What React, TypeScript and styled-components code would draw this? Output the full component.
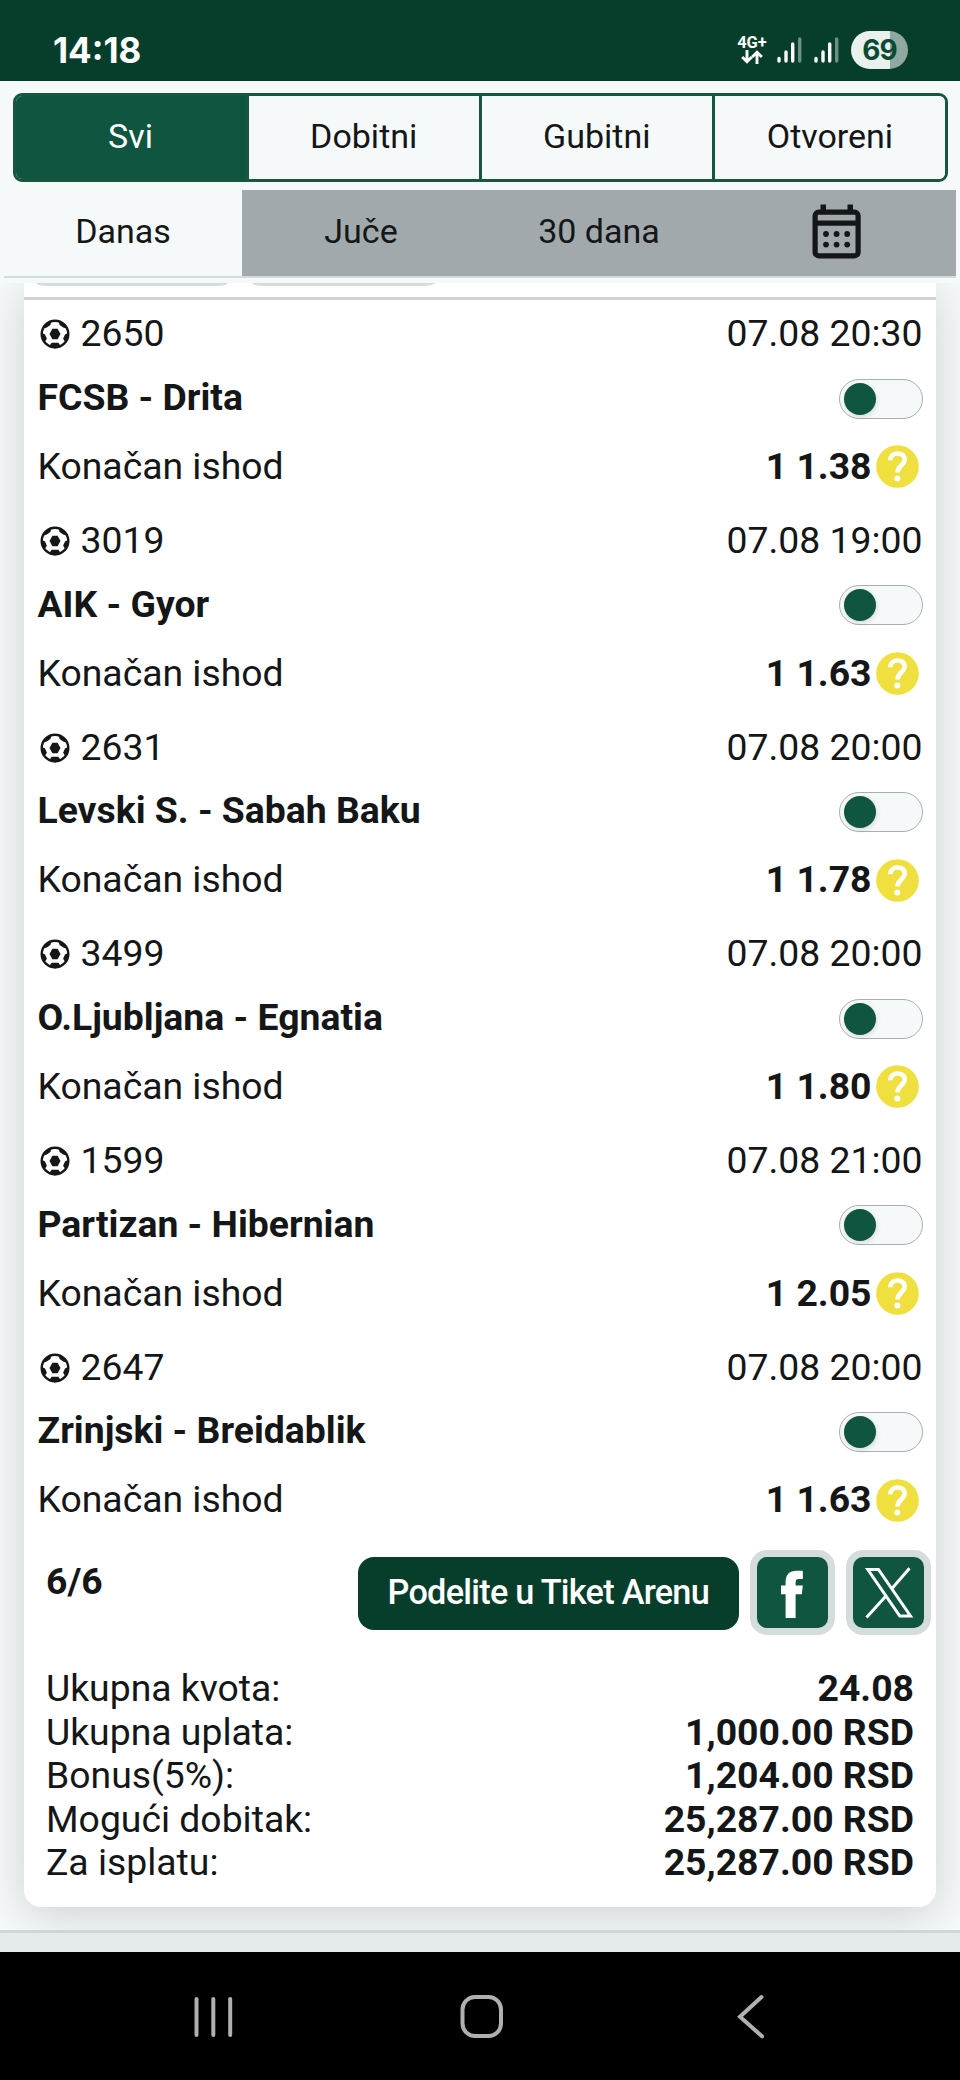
import React from "react";
import styled, { createGlobalStyle } from "styled-components";

const GlobalStyle = createGlobalStyle`
  *, *::before, *::after { box-sizing: border-box; }
  body { margin: 0; background: #f5f9fa; }
  button { font: inherit; color: inherit; border: 0; padding: 0; margin: 0; background: none; }
`;

const Screen = styled.div`
  width: 960px;
  height: 2080px;
  display: flex;
  flex-direction: column;
  overflow: hidden;
  background: #f5f9fa;
  color: #141617;
  font-family: Roboto, "Liberation Sans", sans-serif;
  font-size: 37.33px;
`;

const StatusBar = styled.div`
  flex: none;
  height: 80.5px;
  padding: 19px 52px 0 53px;
  display: flex;
  align-items: center;
  justify-content: space-between;
  background: #063e2b;
  color: #fff;
`;

const Clock = styled.span`
  font-family: Inter, sans-serif;
  font-weight: 700;
  font-size: 35px;
  line-height: 40px;
`;

const StatusIcons = styled.div`
  display: flex;
  align-items: center;
`;

const Network = styled.div`
  width: 30px;
  display: flex;
  flex-direction: column;
  align-items: center;
  margin-right: 9px;
  font-weight: 700;
  font-size: 16.5px;
  line-height: 15px;
`;

const Signal = styled.svg`
  width: 26px;
  height: 28px;
  margin-right: 10.5px;
`;

const Battery = styled.div`
  width: 57px;
  height: 38px;
  margin-left: 2px;
  border-radius: 19px;
  background: linear-gradient(to right, #e9f1ee 0 69%, #8fa9a0 69%);
  color: #0b4a35;
  font-family: Inter, sans-serif;
  font-weight: 700;
  font-size: 28px;
  letter-spacing: -1px;
  line-height: 38px;
  text-align: center;
`;

const Header = styled.header`
  flex: none;
  height: 202.5px;
  padding: 12.5px 4px 0;
  position: relative;
  z-index: 1;
  background: #f5f9fa;
  font-size: 34px;
`;

const FilterTabs = styled.nav`
  display: flex;
  height: 88.5px;
  margin: 0 8px 0 8.5px;
  border: 3px solid #17563f;
  border-radius: 9px;
  overflow: hidden;
`;

const FilterTab = styled.button<{ $active?: boolean }>`
  flex: 1;
  padding-bottom: 3px;
  background: ${(p) => (p.$active ? "#0f5540" : "#f5f9fa")};
  color: ${(p) => (p.$active ? "#fff" : "inherit")};
  & + & { border-left: 3px solid #17563f; }
`;

const PeriodTabs = styled.nav`
  display: flex;
  height: 88px;
  margin-top: 8.5px;
  border-bottom: 2.67px solid #d5dbdd;
`;

const PeriodTab = styled.button<{ $active?: boolean }>`
  flex: 1;
  display: flex;
  align-items: center;
  justify-content: center;
  padding-bottom: 4px;
  background: ${(p) => (p.$active ? "#f5f9fa" : "#a2a9ac")};
`;

const Content = styled.main`
  flex: none;
  height: 1650px;
  padding: 0 24px;
  overflow: hidden;
  border-bottom: 3px solid #d0d5d7;
`;

const Ticket = styled.article`
  height: 1623.5px;
  background: #fff;
  border-radius: 0 0 17px 17px;
  box-shadow: 0 8px 46px rgba(0, 0, 0, 0.16);
`;

const ChipStrip = styled.div`
  height: 16.5px;
  display: flex;
  gap: 24px;
  padding-left: 12px;
  border-bottom: 3px solid #d0d2d3;
`;

const ChipEdge = styled.div<{ $width: number }>`
  width: ${(p) => p.$width}px;
  height: 3px;
  background: #d5dcde;
  border-radius: 0 0 12px 12px / 0 0 3px 3px;
`;

const Match = styled.section`
  padding: 0 13.5px;
`;

const Line = styled.div<{ $height: number; $bold?: boolean }>`
  height: ${(p) => p.$height}px;
  padding-bottom: 1.5px;
  display: flex;
  align-items: center;
  justify-content: space-between;
  font-weight: ${(p) => (p.$bold ? 700 : 400)};
  white-space: nowrap;
`;

const Code = styled.span`
  display: flex;
  align-items: center;
  gap: 11px;
  padding-left: 2px;

  svg { margin-top: 2px; }
`;

const Toggle = styled.button`
  width: 84px;
  height: 40px;
  margin: 3.5px 0 0;
  padding: 0 4px;
  display: flex;
  align-items: center;
  border: 1px solid #a9aeb0;
  border-radius: 20px;
  background: #f5f9fa;
`;

const Knob = styled.span`
  width: 32px;
  height: 32px;
  border-radius: 50%;
  background: #0f5540;
  box-shadow: 1px 2px 5px rgba(0, 0, 0, 0.12);
`;

const Odds = styled.span`
  display: flex;
  align-items: center;
  gap: 4.5px;
  padding-right: 3.5px;
  font-weight: 700;

  svg { margin-top: 2px; }
`;

const Actions = styled.div`
  height: 96px;
  padding: 10.5px 5px 0 22px;
  display: flex;
  align-items: flex-start;
`;

const Count = styled.strong`
  flex: 1;
  padding-top: 9px;
  line-height: 44px;
`;

const ShareButton = styled.button`
  width: 381.5px;
  height: 73.5px;
  margin: 7px 10.5px 0 0;
  padding-bottom: 3px;
  border-radius: 16px;
  background: #063e2b;
  color: #fff;
  font-size: 34.3px;
  font-weight: 500;
  letter-spacing: -0.75px;
  white-space: nowrap;
`;

const SocialButton = styled.button`
  width: 85.5px;
  height: 85.5px;
  border: 7px solid #d5dcde;
  border-radius: 17px;
  background: #d5dcde;
  & + & { margin-left: 10.5px; }
`;

const SocialFace = styled.span`
  display: flex;
  width: 100%;
  height: 100%;
  border-radius: 10px;
  background: #0f5540;
`;

const Totals = styled.dl`
  margin: 0;
  padding: 31.5px 22px 0;
`;

const TotalRow = styled.div`
  height: 43.6px;
  display: flex;
  justify-content: space-between;
  align-items: center;
  line-height: 43.6px;
`;

const Term = styled.dt``;

const Amount = styled.dd`
  margin: 0;
  font-weight: 700;
`;

const PageFoot = styled.div`
  flex: none;
  height: 19px;
  background: #e5eaec;
`;

const NavBar = styled.footer`
  flex: 1;
  display: flex;
  align-items: center;
  justify-content: space-between;
  padding: 2px 187px 0 187px;
  background: #000;
`;

const Bars = () => (
  <Signal viewBox="0 0 26 28" stroke="#fff" strokeWidth="3.4" strokeLinecap="round">
    <path d="M3 22.5V25M10 16V25M16.7 8V25" />
    <path d="M23.7 3V25" stroke="#6d8f84" />
  </Signal>
);

const SoccerBall = () => (
  <svg width="30" height="30" viewBox="0 0 30 30">
    <circle cx="15" cy="15" r="13.3" fill="#fff" stroke="#141617" strokeWidth="2.4" />
    <g fill="#141617">
      <path d="M12.4 9.8h5.2l2.9 5.2-2.9 5.2h-5.2L9.5 15z" />
      <path d="M4.2 6.2 11.6 1.4 10.4 6 6.8 8.4 3 9.8z" />
      <path d="M25.8 6.2 18.4 1.4 19.6 6 23.2 8.4 27 9.8z" />
      <path d="M1.2 13.5 5 15.4 6.9 19.8 4.6 23.2 1.6 19z" />
      <path d="M28.8 13.5 25 15.4 23.1 19.8 25.4 23.2 28.4 19z" />
      <path d="M9 27.6 11.6 23.8H18.4L21 27.6 15 29.4z" />
    </g>
  </svg>
);

const QuestionBadge = () => (
  <svg width="43" height="43" viewBox="0 0 43 43">
    <circle cx="21.5" cy="21.5" r="21.3" fill="#efdf3f" />
    <path
      d="M14.3 15.2C14.3 6.3 28.7 6.3 28.7 14.6C28.7 20.2 21.5 20.6 21.5 27.6"
      fill="none"
      stroke="#fff"
      strokeWidth="4.6"
    />
    <circle cx="21.3" cy="33.4" r="3" fill="#fff" />
  </svg>
);

const CalendarIcon = () => (
  <svg width="50" height="56" viewBox="0 0 50 56">
    <path d="M8.5 1.5h5.5v6H8.5zM35.5 1.5H41v6h-5.5z" fill="#141617" />
    <rect x="3.1" y="9.2" width="43" height="43.6" rx="3.5" fill="none" stroke="#141617" strokeWidth="5.2" />
    <path d="M4 20.2H46" stroke="#141617" strokeWidth="5.2" />
    <g fill="#141617">
      {[14, 24.6, 35.2].map((x) =>
        [31, 41.6].map((y) => <circle key={`${x}-${y}`} cx={x} cy={y} r="2.9" />)
      )}
    </g>
  </svg>
);

const matches = [
  { code: "2650", time: "07.08 20:30", teams: "FCSB - Drita", odds: "1.38" },
  { code: "3019", time: "07.08 19:00", teams: "AIK - Gyor", odds: "1.63" },
  { code: "2631", time: "07.08 20:00", teams: "Levski S. - Sabah Baku", odds: "1.78" },
  { code: "3499", time: "07.08 20:00", teams: "O.Ljubljana - Egnatia", odds: "1.80" },
  { code: "1599", time: "07.08 21:00", teams: "Partizan - Hibernian", odds: "2.05" },
  { code: "2647", time: "07.08 20:00", teams: "Zrinjski - Breidablik", odds: "1.63" },
];

const totals = [
  ["Ukupna kvota:", "24.08"],
  ["Ukupna uplata:", "1,000.00 RSD"],
  ["Bonus(5%):", "1,204.00 RSD"],
  ["Mogući dobitak:", "25,287.00 RSD"],
  ["Za isplatu:", "25,287.00 RSD"],
];

export default function App() {
  return (
    <Screen>
      <GlobalStyle />
      <StatusBar>
        <Clock>14:18</Clock>
        <StatusIcons>
          <Network>
            4G+
            <svg width="22" height="14" viewBox="0 0 22 14" fill="none" stroke="#fff" strokeWidth="2.9">
              <path d="M6 0V12M1.2 7 6 11.8 10.8 7M16 14V2M11.2 7 16 2.2 20.8 7" />
            </svg>
          </Network>
          <Bars />
          <Bars />
          <Battery>69</Battery>
        </StatusIcons>
      </StatusBar>

      <Header>
        <FilterTabs>
          <FilterTab $active>Svi</FilterTab>
          <FilterTab>Dobitni</FilterTab>
          <FilterTab>Gubitni</FilterTab>
          <FilterTab>Otvoreni</FilterTab>
        </FilterTabs>
        <PeriodTabs>
          <PeriodTab $active>Danas</PeriodTab>
          <PeriodTab>Juče</PeriodTab>
          <PeriodTab>30 dana</PeriodTab>
          <PeriodTab aria-label="Kalendar">
            <CalendarIcon />
          </PeriodTab>
        </PeriodTabs>
      </Header>

      <Content>
        <Ticket>
          <ChipStrip>
            <ChipEdge $width={192} />
            <ChipEdge $width={183} />
          </ChipStrip>
          {matches.map((m) => (
            <Match key={m.code}>
              <Line $height={69}>
                <Code>
                  <SoccerBall />
                  {m.code}
                </Code>
                <span>{m.time}</span>
              </Line>
              <Line $height={58.67} $bold>
                <span>{m.teams}</span>
                <Toggle aria-label={m.teams}>
                  <Knob />
                </Toggle>
              </Line>
              <Line $height={79}>
                <span>Konačan ishod</span>
                <Odds>
                  1 {m.odds}
                  <QuestionBadge />
                </Odds>
              </Line>
            </Match>
          ))}
          <Actions>
            <Count>6/6</Count>
            <ShareButton>Podelite u Tiket Arenu</ShareButton>
            <SocialButton aria-label="Facebook">
              <SocialFace>
                <svg width="71.5" height="71.5" viewBox="0 0 71.5 71.5">
                  <path
                    d="M28.6 61V37.2H24V28.5H28.6V25C28.6 17.5 32.5 13.7 39.5 13.7H45.8V22H42C39.4 22 38.6 23.2 38.6 25.4V28.5H45.8L44.8 37.2H38.6V61Z"
                    fill="#fff"
                  />
                </svg>
              </SocialFace>
            </SocialButton>
            <SocialButton aria-label="X">
              <SocialFace>
                <svg width="71.5" height="71.5" viewBox="0 0 71.5 71.5" fill="none" stroke="#fff" strokeWidth="3">
                  <path d="M14.8 12.5H25.5L57.5 59H46.8Z" />
                  <path d="M56.5 11.3 38.8 31.8M33.6 38.2 13.5 60.5" />
                </svg>
              </SocialFace>
            </SocialButton>
          </Actions>
          <Totals>
            {totals.map(([label, amount]) => (
              <TotalRow key={label}>
                <Term>{label}</Term>
                <Amount>{amount}</Amount>
              </TotalRow>
            ))}
          </Totals>
        </Ticket>
      </Content>
      <PageFoot />

      <NavBar>
        <svg width="52" height="46" viewBox="0 0 52 46" stroke="#b0b0b0" strokeWidth="4" strokeLinecap="round">
          <path d="M9.5 5V41M26.3 5V41M43.2 5V41" />
        </svg>
        <svg width="46" height="46" viewBox="0 0 46 46" fill="none" stroke="#b0b0b0" strokeWidth="4">
          <rect x="2.5" y="3" width="38.5" height="39" rx="12.5" />
        </svg>
        <svg width="46" height="46" viewBox="0 0 46 46" fill="none" stroke="#b0b0b0" strokeWidth="4" strokeLinecap="round">
          <path d="M34.5 3 13 22.7 35 42.3" />
        </svg>
      </NavBar>
    </Screen>
  );
}
